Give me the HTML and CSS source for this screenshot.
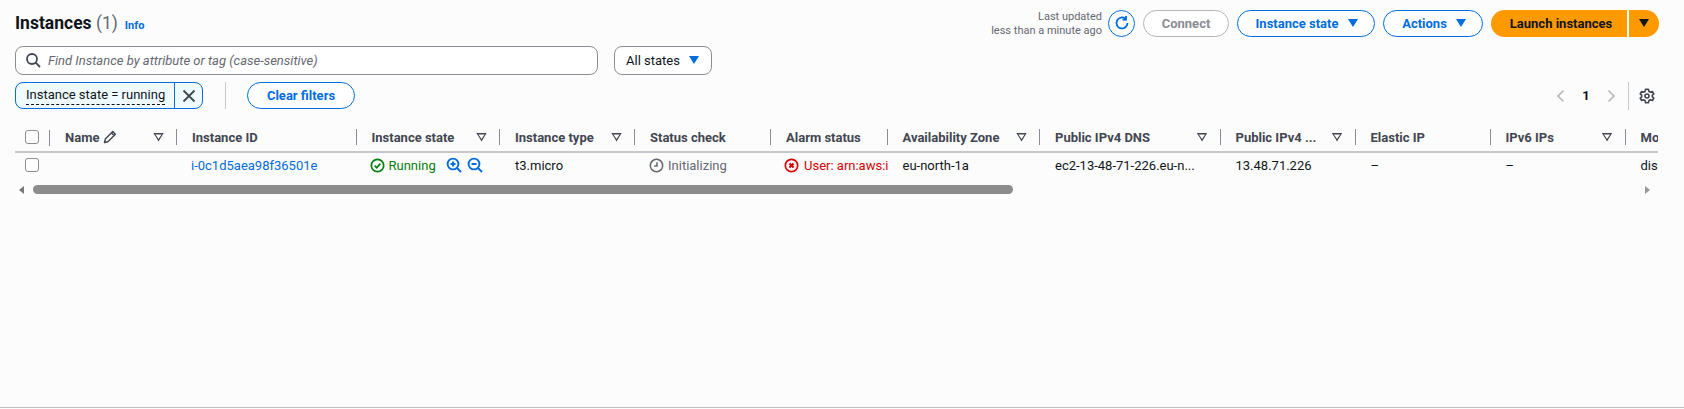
FILE: index.html
```html
<!DOCTYPE html>
<html>
<head>
	<title>Instances</title>
	<meta charset="utf-8" />
    <link rel="stylesheet" href="styles.css">
</head>
<body>
<div class="page">
    <div class="top-row">
        <h1 class="title">Instances <span class="count">(1)</span></h1>
        <a class="info">Info</a>
        <div class="updated">Last updated<br/>less than a minute ago</div>
        <button class="btn btn-icon">
            <svg width="16" height="16" viewBox="0 0 16 16" fill="none" stroke="currentColor" stroke-width="1.8"><path d="M13.5 8a5.5 5.5 0 1 1-2-4.3"/><path d="M12 1v3.5H8.5" stroke-linejoin="miter"/></svg>
        </button>
        <button class="btn btn-disabled btn-connect">Connect</button>
        <button class="btn btn-state">Instance state <span class="caret"></span></button>
        <button class="btn btn-actions">Actions <span class="caret"></span></button>
        <div class="launch">
            <button class="launch-main">Launch instances</button>
            <button class="launch-drop"><span class="caret caret-dark"></span></button>
        </div>
    </div>

    <div class="search-row">
        <div class="search">
            <svg width="16" height="16" viewBox="0 0 16 16" fill="none" stroke="#424650" stroke-width="1.8"><circle cx="7" cy="7" r="5"/><path d="M10.7 10.7 15 15"/></svg>
            <span>Find Instance by attribute or tag (case-sensitive)</span>
        </div>
        <div class="select">All states <span class="caret"></span></div>
    </div>

    <div class="filter-row">
        <div class="chip">
            <span class="chip-label"><span class="chip-text">Instance state = running</span></span>
            <span class="chip-x">
                <svg width="14" height="14" viewBox="0 0 14 14" fill="none" stroke="#424650" stroke-width="1.8"><path d="M1.5 1.5l11 11M12.5 1.5l-11 11"/></svg>
            </span>
        </div>
        <div class="vline"></div>
        <button class="btn btn-clear">Clear filters</button>
        <div class="pager">
            <svg width="16" height="16" viewBox="0 0 16 16" fill="none" stroke="#b4b4bb" stroke-width="1.6"><path d="M10.5 2.5 5 8l5.5 5.5"/></svg>
            <b>1</b>
            <svg width="16" height="16" viewBox="0 0 16 16" fill="none" stroke="#b4b4bb" stroke-width="1.6"><path d="M5.5 2.5 11 8l-5.5 5.5"/></svg>
            <span class="pager-line"></span>
            <svg class="gear" width="16" height="16" viewBox="0 0 16 16" fill="none" stroke="#424650" stroke-width="1.6"><circle cx="8" cy="8" r="2"/><path d="M6.6 1.2h2.8l.4 2 1.7 1 1.9-.7 1.4 2.4-1.5 1.3v1.6l1.5 1.3-1.4 2.4-1.9-.7-1.7 1-.4 2H6.6l-.4-2-1.7-1-1.9.7-1.4-2.4 1.5-1.3V7.2L1.2 5.9l1.4-2.4 1.9.7 1.7-1z" stroke-linejoin="round"/></svg>
        </div>
    </div>

    <div class="table-wrap">
        <table class="grid">
            <colgroup>
                <col class="c-check"><col class="c-name"><col class="c-id"><col class="c-state"><col class="c-type">
                <col class="c-status"><col class="c-alarm"><col class="c-az"><col class="c-dns"><col class="c-ip">
                <col class="c-eip"><col class="c-v6"><col class="c-mon">
            </colgroup>
            <thead>
                <tr>
                    <th class="check"><span class="box"></span></th>
                    <th><div class="th">Name
                        <svg class="pencil" width="14" height="14" viewBox="0 0 14 14" fill="none" stroke="#424650" stroke-width="1.4"><path d="M1.5 12.5l.8-3.4L9.8 1.6l2.6 2.6-7.5 7.5zM8.4 3l2.6 2.6" stroke-linejoin="round"/></svg>
                        <span class="sort"></span></div></th>
                    <th><div class="th">Instance ID</div></th>
                    <th><div class="th">Instance state <span class="sort"></span></div></th>
                    <th><div class="th">Instance type <span class="sort"></span></div></th>
                    <th><div class="th">Status check</div></th>
                    <th><div class="th">Alarm status</div></th>
                    <th><div class="th">Availability Zone <span class="sort"></span></div></th>
                    <th><div class="th">Public IPv4 DNS <span class="sort"></span></div></th>
                    <th><div class="th">Public IPv4 ... <span class="sort"></span></div></th>
                    <th><div class="th">Elastic IP</div></th>
                    <th><div class="th">IPv6 IPs <span class="sort"></span></div></th>
                    <th class="last"><div class="th">Monitoring</div></th>
                </tr>
            </thead>
            <tbody>
                <tr>
                    <td class="check"><span class="box"></span></td>
                    <td></td>
                    <td><a class="link">i-0c1d5aea98f36501e</a></td>
                    <td><div class="cell running">
                        <svg width="15" height="15" viewBox="0 0 16 16" fill="none" stroke="#037f0c" stroke-width="1.8"><circle cx="8" cy="8" r="6.6"/><path d="M5 8.2 7.2 10.4 11 6"/></svg>
                        Running
                        <svg class="zoom-ic" width="16" height="16" viewBox="0 0 16 16" fill="none" stroke="#006ce0" stroke-width="1.9"><circle cx="7" cy="7" r="5.4"/><path d="M11 11l4 4M4.5 7h5M7 4.5v5"/></svg>
                        <svg class="zoom-ic2" width="16" height="16" viewBox="0 0 16 16" fill="none" stroke="#006ce0" stroke-width="1.9"><circle cx="7" cy="7" r="5.4"/><path d="M11 11l4 4M4.5 7h5"/></svg>
                    </div></td>
                    <td>t3.micro</td>
                    <td><div class="cell pending">
                        <svg width="15" height="15" viewBox="0 0 16 16" fill="none" stroke="#656871" stroke-width="1.6"><circle cx="8" cy="8" r="6.6"/><path d="M8.5 4.5V8.5H5.5"/></svg>
                        Initializing
                    </div></td>
                    <td><div class="cell alarm">
                        <svg width="15" height="15" viewBox="0 0 16 16" fill="none" stroke="#db0000" stroke-width="1.8"><circle cx="8" cy="8" r="6.6"/><path d="M5.8 5.8l4.4 4.4M10.2 5.8l-4.4 4.4" stroke-width="2.2"/></svg>
                        <span class="alarm-text">User: arn:aws:iam::</span>
                    </div></td>
                    <td>eu-north-1a</td>
                    <td>ec2-13-48-71-226.eu-n...</td>
                    <td>13.48.71.226</td>
                    <td>–</td>
                    <td>–</td>
                    <td class="last">disabled</td>
                </tr>
            </tbody>
        </table>
    </div>

    <div class="scroll">
        <span class="arrow-l"></span>
        <div class="track"><div class="thumb"></div></div>
        <span class="arrow-r"></span>
    </div>
</div>
</body>
</html>
```

FILE: styles.css
```css
* {
    box-sizing: border-box;
}
html, body {
    margin: 0;
    height: 100%;
}
body {
    background: #fcfcfc;
    color: #0f141a;
    font-family: "Roboto", "Noto Sans", sans-serif;
    font-size: 13px;
    overflow: hidden;
}
button {
    font-family: inherit;
}
svg {
    flex-shrink: 0;
}
.page {
    height: 408px;
    border-bottom: 1px solid #c0c0c0;
    padding: 10px 25px 0 15px;
}

/* top row */
.top-row {
    display: flex;
    align-items: center;
    height: 27px;
}
.title {
    margin: 0;
    font-size: 17.5px;
    line-height: 25px;
    font-weight: 700;
}
.count {
    font-weight: 400;
    color: #656871;
}
.info {
    margin-left: 7px;
    font-size: 11px;
    font-weight: 700;
    color: #006ce0;
    margin-top: 3px;
}
.updated {
    margin-left: auto;
    margin-right: 6px;
    text-align: right;
    font-size: 11px;
    line-height: 14px;
    color: #656871;
}
.btn {
    height: 27px;
    border: 1.5px solid #006ce0;
    border-radius: 14px;
    background: #fff;
    color: #006ce0;
    font-size: 13px;
    font-weight: 700;
    padding: 0 0 1px;
    display: flex;
    align-items: center;
    justify-content: center;
}
.btn-icon {
    width: 27px;
}
.btn-disabled {
    border-color: #b4b4bb;
    color: #8c8c94;
}
.btn-connect {
    width: 86px;
    margin-left: 8px;
}
.btn-state {
    width: 138px;
    margin-left: 8px;
    gap: 10px;
    padding-left: 2px;
}
.btn-actions {
    width: 100px;
    margin-left: 8px;
    gap: 9px;
    padding-left: 2px;
}
.caret {
    display: inline-block;
    width: 0;
    height: 0;
    border-left: 5.5px solid transparent;
    border-right: 5.5px solid transparent;
    border-top: 8px solid #006ce0;
}
.caret-dark {
    border-top-color: #0f141a;
}
.launch {
    display: flex;
    margin-left: 8px;
    gap: 2px;
}
.launch-main, .launch-drop {
    height: 27px;
    border: 0;
    background: #ff9900;
    color: #0f141a;
    font-size: 13px;
    font-weight: 700;
    padding: 0 0 1px;
}
.launch-main {
    width: 136px;
    padding-left: 4px;
    border-radius: 14px 0 0 14px;
}
.launch-drop {
    width: 30px;
    border-radius: 0 14px 14px 0;
    display: flex;
    align-items: center;
    justify-content: center;
}

/* search */
.search-row {
    display: flex;
    gap: 16px;
    margin-top: 9px;
}
.search {
    width: 583px;
    height: 29px;
    border: 1px solid #8c8c94;
    border-radius: 8px;
    background: #fff;
    display: flex;
    align-items: center;
    gap: 7px;
    padding: 0 0 1px 9px;
    color: #656871;
    font-style: italic;
}
.select {
    width: 98px;
    height: 29px;
    border: 1px solid #8c8c94;
    border-radius: 8px;
    background: #fff;
    display: flex;
    align-items: center;
    justify-content: space-between;
    padding: 0 12px 1px 11px;
    color: #0f141a;
}

/* filter chips */
.filter-row {
    display: flex;
    align-items: center;
    margin-top: 7px;
    height: 27px;
}
.chip {
    display: flex;
    width: 188px;
    height: 27px;
    border: 1.5px solid #006ce0;
    border-radius: 8px;
    background: #f0fbff;
    overflow: hidden;
}
.chip-label {
    flex: 1;
    padding-left: 10px;
    line-height: 23px;
    border-right: 1.5px solid #006ce0;
    white-space: nowrap;
}
.chip-text {
    display: inline-block;
    line-height: 18px;
    border-bottom: 1px dashed #0f141a;
}
.chip-x {
    width: 27px;
    display: flex;
    align-items: center;
    justify-content: center;
}
.vline {
    width: 1px;
    height: 27px;
    background: #c6c6cd;
    margin-left: 22px;
}
.btn-clear {
    width: 108px;
    margin-left: 21px;
}
.pager {
    margin-left: auto;
    display: flex;
    align-items: center;
    margin-right: 4px;
}
.pager b {
    width: 34px;
    text-align: center;
    font-size: 13px;
}
.pager-line {
    width: 1px;
    height: 28px;
    background: #c6c6cd;
    margin: 0 10px 0 9px;
}

/* table */
.table-wrap {
    width: 1643px;
    margin-top: 14px;
    overflow: hidden;
}
.grid {
    table-layout: fixed;
    border-collapse: collapse;
    width: 1780px;
}
.c-check { width: 35px; }
.c-name { width: 127px; }
.c-id { width: 179.5px; }
.c-state { width: 143.5px; }
.c-type { width: 135px; }
.c-status { width: 136px; }
.c-alarm { width: 116.5px; }
.c-az { width: 152.5px; }
.c-dns { width: 180.5px; }
.c-ip { width: 135px; }
.c-eip { width: 135px; }
.c-v6 { width: 135px; }
.c-mon { width: 170px; }
th {
    height: 29px;
    padding: 0 0 0 15px;
    border-bottom: 2px solid #c6c6cd;
    text-align: left;
    font-size: 13px;
    color: #424650;
    font-weight: 700;
}
.th {
    display: flex;
    align-items: center;
    height: 16px;
    border-right: 1px solid #8c8c94;
    padding-right: 12px;
    white-space: nowrap;
}
th.last .th {
    border-right: 0;
}
.sort {
    margin-left: auto;
    width: 11px;
    height: 9px;
    background: #424650;
    clip-path: polygon(0 0, 100% 0, 50% 100%, 36% 70%, 50% 72%, 78% 22%, 22% 22%, 50% 72%, 36% 70%);
}
.pencil {
    margin-left: 4px;
}
td {
    height: 25px;
    padding: 0 0 0 15px;
    white-space: nowrap;
    overflow: hidden;
    color: #0f141a;
}
.check {
    padding: 0 0 0 10px;
    position: relative;
}
th.check::after {
    content: "";
    position: absolute;
    right: 0;
    top: 7px;
    height: 16px;
    width: 1px;
    background: #8c8c94;
}
.box {
    display: block;
    width: 14px;
    height: 14px;
    border: 1px solid #8c8c94;
    border-radius: 3px;
    background: #fff;
}
.link {
    color: #006ce0;
    margin-left: -1px;
}
.cell {
    display: flex;
    align-items: center;
    gap: 4px;
    overflow: hidden;
    margin-left: -2px;
}
.running {
    color: #037f0c;
}
.zoom-ic {
    margin-left: 6px;
}
.zoom-ic2 {
    margin-left: 1px;
}
.pending {
    color: #656871;
    margin-left: -1px;
}
.alarm {
    color: #db0000;
    gap: 5px;
}

/* scrollbar */
.scroll {
    display: flex;
    align-items: center;
    width: 1643px;
    height: 9px;
    margin-top: 8px;
}
.track {
    flex: 1;
    margin: 0 12px 0 9px;
}
.thumb {
    width: 980px;
    margin-left: 0;
    height: 9px;
    border-radius: 5px;
    background: #8c8c8c;
}
.arrow-l, .arrow-r {
    width: 0;
    height: 0;
    border-top: 4px solid transparent;
    border-bottom: 4px solid transparent;
}
.arrow-l {
    margin-left: 4px;
    border-right: 5px solid #777;
}
.arrow-r {
    margin-right: 8px;
    border-left: 5px solid #999;
}
```
